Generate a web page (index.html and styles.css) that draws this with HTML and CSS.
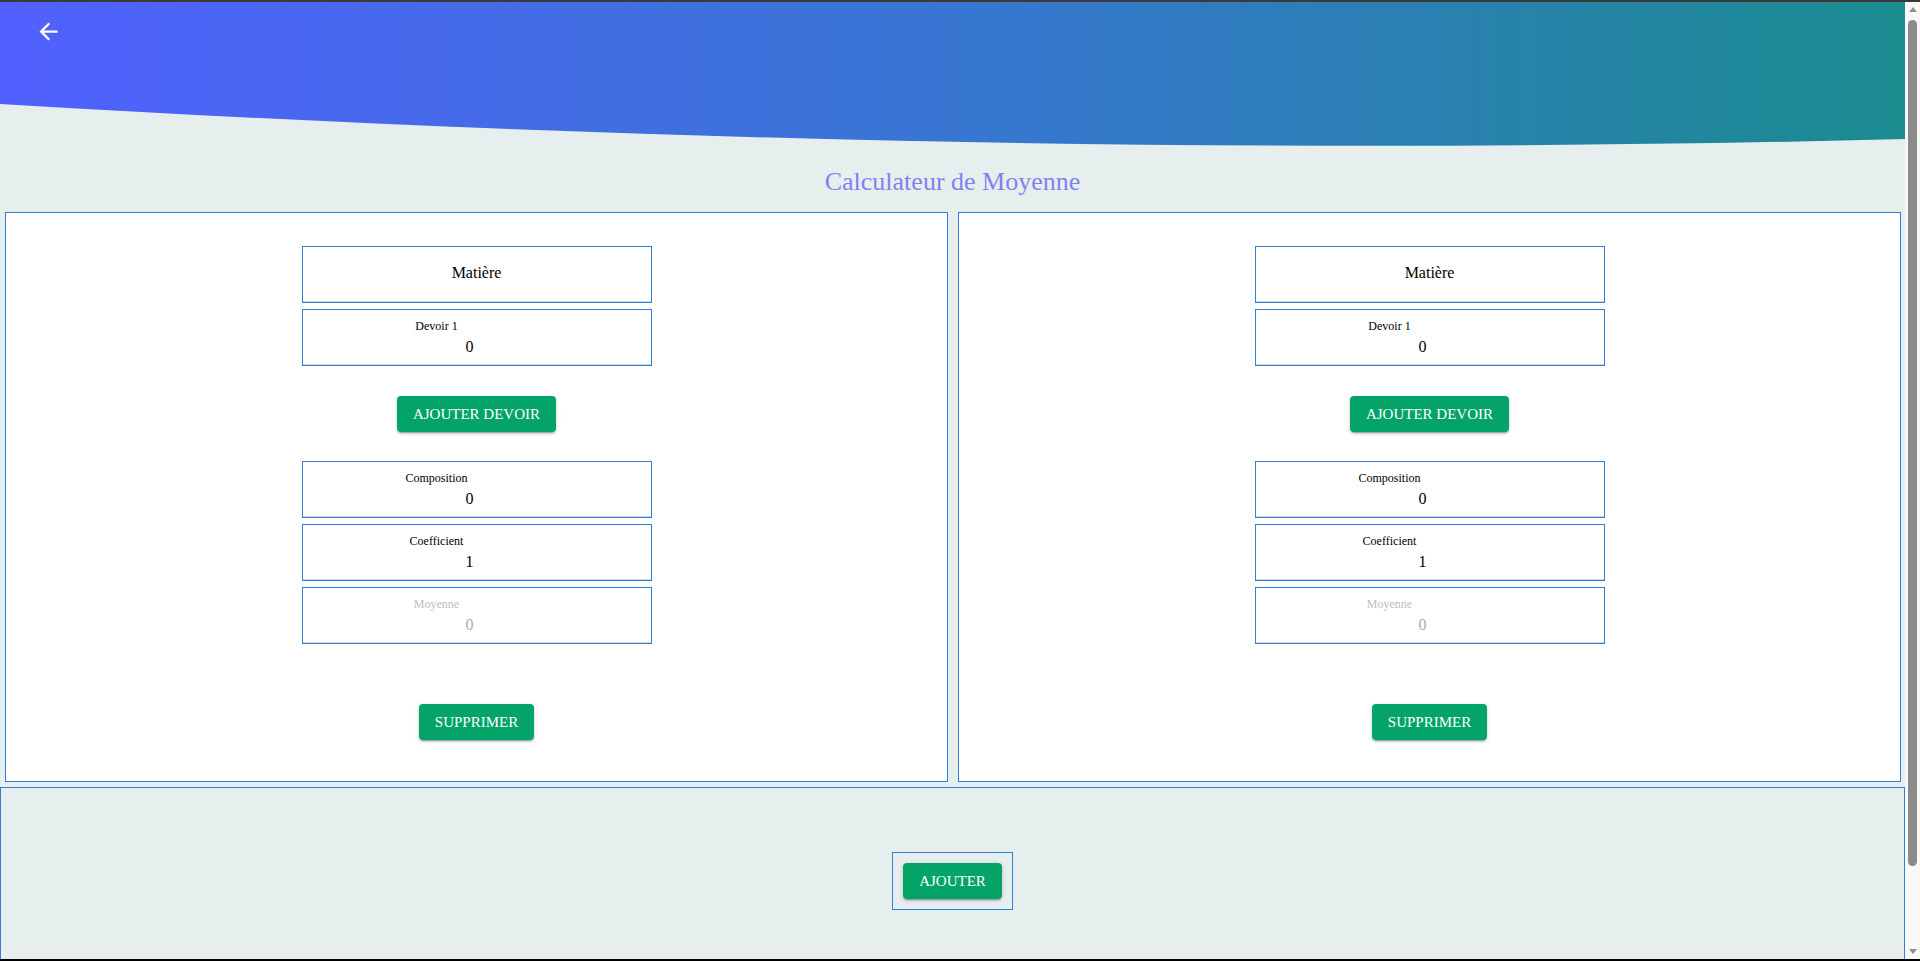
FILE: index.html
```html
<!DOCTYPE html>
<html lang="fr">
<head>
<meta charset="utf-8">
<title>Calculateur de Moyenne</title>
<link rel="stylesheet" href="styles.css">
</head>
<body>
<div class="window">
  <div class="app">
    <header class="hero">
      <svg class="hero-bg" viewBox="0 0 1905 146" preserveAspectRatio="none" aria-hidden="true">
        <defs>
          <linearGradient id="heroGrad" x1="0" y1="0" x2="1" y2="0">
            <stop offset="0" stop-color="#5160ff"/>
            <stop offset="0.5" stop-color="#3876d2"/>
            <stop offset="1" stop-color="#1a8b8f"/>
          </linearGradient>
        </defs>
        <path d="M0 0H1905V137C1250 154 600 138 0 102Z" fill="url(#heroGrad)"/>
      </svg>
      <button class="back" type="button" aria-label="Retour">
        <svg viewBox="0 0 24 24"><path d="M20 11H7.830l5.59-5.59L12 4l-8 8 8 8 1.41-1.41L7.83 13H20v-2z"/></svg>
      </button>
    </header>

    <h1 class="title">Calculateur de Moyenne</h1>

    <main class="cards">
      <section class="card">
        <div class="field field-subject">Matière</div>
        <div class="field field-gap">
          <span class="label">Devoir 1</span>
          <span class="value">0</span>
        </div>
        <button class="btn btn-add-devoir" type="button">Ajouter devoir</button>
        <div class="field field-comp">
          <span class="label">Composition</span>
          <span class="value">0</span>
        </div>
        <div class="field field-gap">
          <span class="label">Coefficient</span>
          <span class="value">1</span>
        </div>
        <div class="field field-gap field-disabled">
          <span class="label">Moyenne</span>
          <span class="value">0</span>
        </div>
        <button class="btn btn-delete" type="button">Supprimer</button>
      </section>

      <section class="card">
        <div class="field field-subject">Matière</div>
        <div class="field field-gap">
          <span class="label">Devoir 1</span>
          <span class="value">0</span>
        </div>
        <button class="btn btn-add-devoir" type="button">Ajouter devoir</button>
        <div class="field field-comp">
          <span class="label">Composition</span>
          <span class="value">0</span>
        </div>
        <div class="field field-gap">
          <span class="label">Coefficient</span>
          <span class="value">1</span>
        </div>
        <div class="field field-gap field-disabled">
          <span class="label">Moyenne</span>
          <span class="value">0</span>
        </div>
        <button class="btn btn-delete" type="button">Supprimer</button>
      </section>
    </main>

    <footer class="add-zone">
      <div class="add-box">
        <button class="btn" type="button">Ajouter</button>
      </div>
    </footer>
  </div>

  <div class="scrollbar" aria-hidden="true">
    <div class="sb-arrow sb-up"></div>
    <div class="sb-track"><div class="sb-thumb"></div></div>
    <div class="sb-arrow sb-down"></div>
  </div>
</div>
</body>
</html>
```

FILE: styles.css
```css
* {
  box-sizing: border-box;
}

html,
body {
  height: 100%;
}

body {
  margin: 0;
  display: flex;
  flex-direction: column;
  overflow: hidden;
  border-top: 2px solid #3a3a3a;
  border-bottom: 2px solid #000;
  background: #e7efee;
  font-family: "Liberation Serif", "Times New Roman", serif;
  color: #000;
}

.window {
  flex: 1;
  min-height: 0;
  display: flex;
}

.app {
  flex: 1;
  min-width: 0;
  overflow: hidden;
  background: #e7efee;
}

/* Scrollbar */
.scrollbar {
  width: 15px;
  flex: none;
  display: flex;
  flex-direction: column;
  background: #f9f9f9;
}

.sb-arrow {
  height: 15px;
  flex: none;
  display: flex;
  justify-content: center;
}

.sb-up {
  align-items: flex-end;
  padding-bottom: 5px;
}

.sb-up::before {
  content: "";
  width: 0;
  height: 0;
  border-left: 4.5px solid transparent;
  border-right: 4.5px solid transparent;
  border-bottom: 5px solid #8f8f8f;
}

.sb-down {
  align-items: flex-start;
  padding-top: 5px;
}

.sb-down::before {
  content: "";
  width: 0;
  height: 0;
  border-left: 4.5px solid transparent;
  border-right: 4.5px solid transparent;
  border-top: 5px solid #8f8f8f;
}

.sb-track {
  flex: 1;
  padding: 3px 3px 0;
}

.sb-thumb {
  height: 846px;
  border-radius: 5px;
  background: #8b8b8b;
}

/* Header */
.hero {
  position: relative;
  height: 146px;
  padding: 16px 0 0 35px;
}

.hero-bg {
  position: absolute;
  inset: 0;
  width: 100%;
  height: 100%;
  display: block;
}

.back {
  position: relative;
  display: block;
  width: 27px;
  height: 27px;
  padding: 0;
  border: 0;
  background: none;
  cursor: pointer;
}

.back svg {
  display: block;
  width: 27px;
  height: 27px;
  fill: #fff;
}

/* Title */
.title {
  margin: 19px 0 15px;
  font-size: 26px;
  line-height: 30px;
  font-weight: normal;
  text-align: center;
  color: #8081f1;
}

/* Cards */
.cards {
  display: grid;
  grid-template-columns: 1fr 1fr;
  column-gap: 10px;
  padding: 0 4px 5px 5px;
}

.card {
  display: flex;
  flex-direction: column;
  align-items: center;
  padding: 33px 0 41px;
  background: #fff;
  border: 1px solid #2d80d6;
}

.field {
  display: flex;
  flex-direction: column;
  align-items: center;
  width: 350px;
  height: 57px;
  padding-top: 9px;
  background: #fff;
  border: 1px solid #2d80d6;
  box-shadow: inset 0 -1px 0 #d6d6d6;
}

.field-gap {
  margin-top: 6px;
}

.field-comp {
  margin-top: 29px;
}

.field-subject {
  padding-top: 16px;
  font-size: 16px;
  line-height: 20px;
}

.label {
  align-self: stretch;
  padding-right: 80px;
  font-size: 12px;
  line-height: 14px;
  text-align: center;
}

.value {
  align-self: stretch;
  margin-top: 4px;
  padding-right: 14px;
  font-size: 16px;
  line-height: 20px;
  text-align: center;
}

.field-disabled .label {
  color: #bdbdbd;
}

.field-disabled .value {
  color: #a9a9a9;
}

/* Buttons */
.btn {
  display: block;
  height: 36px;
  padding: 6px 16px;
  border: 0;
  border-radius: 4px;
  background: #04a469;
  color: #fff;
  font-family: "Liberation Serif", "Times New Roman", serif;
  font-size: 15px;
  line-height: 24px;
  text-transform: uppercase;
  box-shadow:
    0 3px 1px -2px rgba(0, 0, 0, 0.2),
    0 2px 2px 0 rgba(0, 0, 0, 0.14),
    0 1px 5px 0 rgba(0, 0, 0, 0.12);
  cursor: pointer;
}

.btn-add-devoir {
  margin-top: 30px;
}

.btn-delete {
  margin-top: 60px;
}

/* Bottom zone */
.add-zone {
  display: flex;
  justify-content: center;
  padding: 64px 0 129px;
  border: 1px solid #2d80d6;
}

.add-box {
  padding: 10px;
  border: 1px solid #2d80d6;
}
```
